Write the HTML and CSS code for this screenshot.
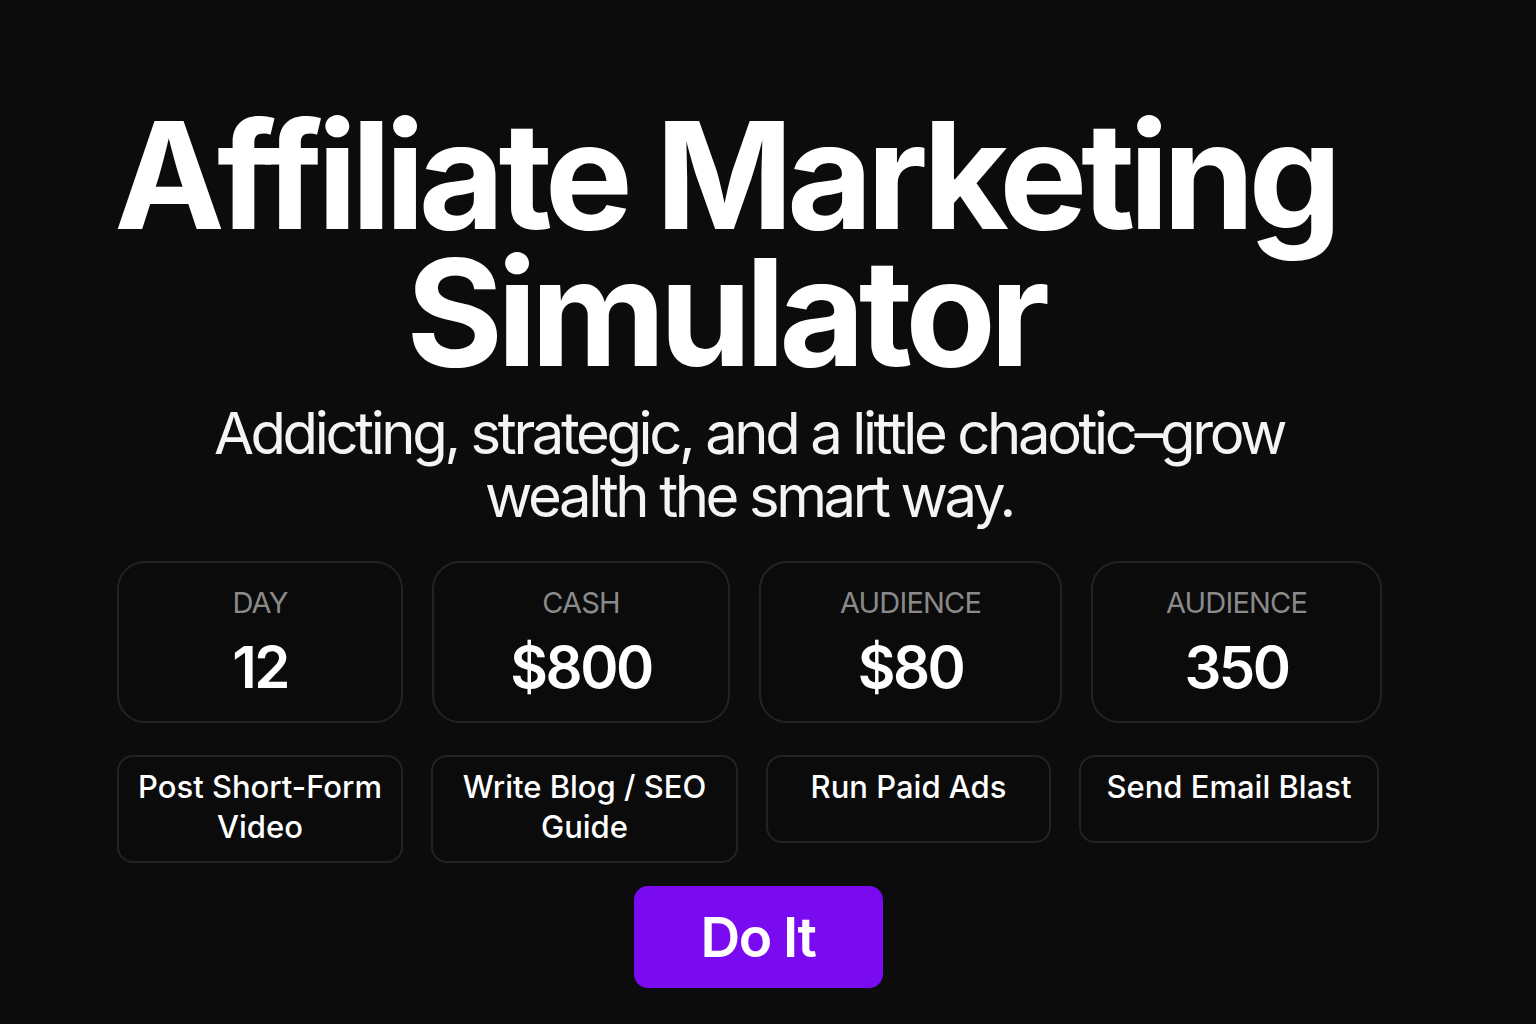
FILE: index.html
```html
<!DOCTYPE html>
<html lang="en">
<head>
<meta charset="utf-8">
<title>Affiliate Marketing Simulator</title>
<link rel="stylesheet" href="styles.css">
</head>
<body>
<main class="page">
  <h1 class="title">Affiliate Marketing<br>Simulator</h1>
  <p class="subtitle">Addicting, strategic, and a little chaotic–grow<br>wealth the smart way.</p>
  <section class="stats">
    <div class="stat"><div class="stat-label">DAY</div><div class="stat-value">12</div></div>
    <div class="stat"><div class="stat-label">CASH</div><div class="stat-value">$800</div></div>
    <div class="stat"><div class="stat-label">AUDIENCE</div><div class="stat-value">$80</div></div>
    <div class="stat"><div class="stat-label">AUDIENCE</div><div class="stat-value">350</div></div>
  </section>
  <section class="actions">
    <button class="action"><span>Post Short-Form Video</span></button>
    <button class="action"><span>Write Blog / SEO Guide</span></button>
    <button class="action"><span>Run Paid Ads</span></button>
    <button class="action"><span>Send Email Blast</span></button>
  </section>
  <div class="cta-row"><button class="cta">Do It</button></div>
</main>
</body>
</html>
```
FILE: styles.css
```css
html, body {
  margin: 0;
  padding: 0;
  background: #0c0c0c;
  height: 100%;
}
body {
  font-family: Inter, "Noto Sans", sans-serif;
  color: #ffffff;
  overflow: hidden;
}
.page {
  width: 1264px;
  margin-left: 117px;
  display: flex;
  flex-direction: column;
}
.title {
  margin: 107px 44px 0 -4px;
  font-size: 148px;
  line-height: 137px;
  font-weight: 700;
  text-align: center;
  letter-spacing: -6.3px;
  white-space: nowrap;
  color: #ffffff;
}
.subtitle {
  margin: 21px 0 0 0;
  font-size: 58px;
  line-height: 63px;
  font-weight: 400;
  text-align: center;
  letter-spacing: -3.4px;
  white-space: nowrap;
  color: #f4f4f4;
}
.stats {
  margin-top: 33px;
  display: grid;
  grid-template-columns: 286px 298px 303px 291px;
  column-gap: 29px;
}
.stat {
  box-sizing: border-box;
  height: 162px;
  border: 2px solid #232323;
  border-radius: 28px;
  background: #0b0b0b;
  padding-top: 25px;
  display: flex;
  flex-direction: column;
  align-items: center;
}
.stat-label {
  font-size: 29px;
  line-height: 29px;
  color: #8a8a8a;
  font-weight: 400;
  letter-spacing: -0.8px;
}
.stat-value {
  margin-top: 21px;
  font-size: 58px;
  line-height: 58px;
  font-weight: 600;
  letter-spacing: -2.5px;
  color: #ffffff;
}
.actions {
  margin-top: 32px;
  display: grid;
  grid-template-columns: 286px 307px 285px 300px;
  column-gap: 28px;
  align-items: start;
}
.action {
  box-sizing: border-box;
  min-height: 88px;
  padding: 10px 10px 14px;
  border: 2px solid #232323;
  border-radius: 16px;
  background: #0b0b0b;
  color: #ffffff;
  font-family: Inter, "Noto Sans", sans-serif;
  font-size: 31px;
  line-height: 40px;
  font-weight: 500;
  text-align: center;
  display: flex;
  flex-direction: column;
  justify-content: flex-start;
  align-items: center;
}
.cta-row {
  margin-top: 23px;
  display: flex;
  justify-content: center;
  padding-left: 18px;
}
.cta {
  width: 249px;
  height: 102px;
  border: none;
  border-radius: 14px;
  background: #7a0af0;
  color: #ffffff;
  font-family: Inter, "Noto Sans", sans-serif;
  font-size: 55px;
  font-weight: 600;
  letter-spacing: -1.5px;
}
```
